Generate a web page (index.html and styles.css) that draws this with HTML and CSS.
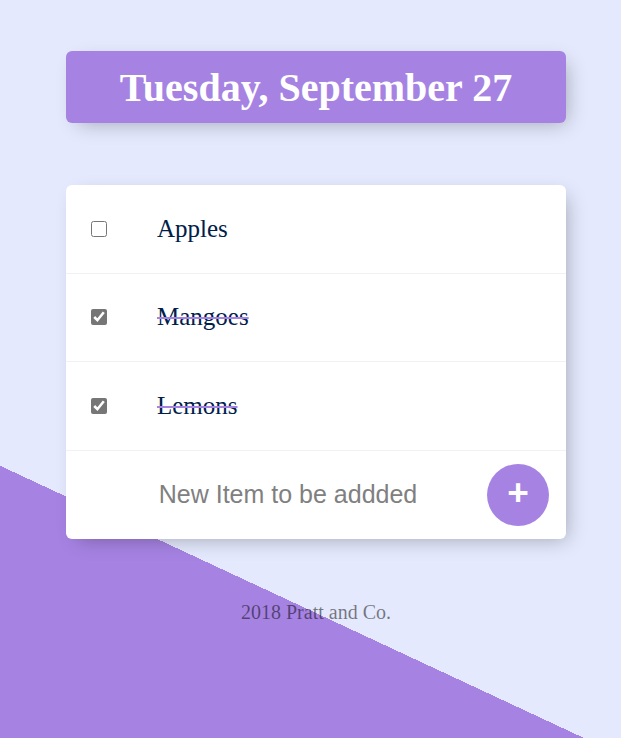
FILE: index.html
```html
<!DOCTYPE html>
<html lang="en">
<head>
<meta charset="utf-8">
<title>To Do List</title>
<link rel="stylesheet" href="styles.css">
</head>
<body>
  <div class="page">
    <div class="box heading">
      <h1>Tuesday, September 27</h1>
    </div>
    <div class="box list">
      <div class="item">
        <input type="checkbox" class="check">
        <p class="label">Apples</p>
      </div>
      <div class="item">
        <input type="checkbox" class="check" checked>
        <p class="label">Mangoes</p>
      </div>
      <div class="item">
        <input type="checkbox" class="check" checked>
        <p class="label">Lemons</p>
      </div>
      <form class="item add-form">
        <input type="text" class="new-item" placeholder="New Item to be addded" autocomplete="off">
        <button type="button" class="add-btn">+</button>
      </form>
    </div>
    <footer class="footer">2018 Pratt and Co.</footer>
  </div>
</body>
</html>
```
FILE: styles.css
```css
html {
  height: 100%;
  background: #E4E9FD linear-gradient(25deg, #A683E3 26.5%, #E4E9FD 26.5%) fixed;
}

body {
  margin: 0;
  padding: 51px 0 0 11px;
  font-family: "Liberation Serif", "Times New Roman", serif;
}

.page {
  width: 500px;
  margin: 0 auto;
}

.box {
  background: #fff;
  border-radius: 6px;
  box-shadow: 6px 6px 19px -6px rgba(0, 0, 0, 0.3);
}

.heading {
  background: #A683E3;
  text-align: center;
  margin-bottom: 62px;
}

.heading h1 {
  margin: 0;
  padding: 12.5px;
  font-size: 40px;
  line-height: 47px;
  font-weight: bold;
  color: #fff;
}

.item {
  box-sizing: border-box;
  height: 88.5px;
  display: flex;
  align-items: center;
  border-bottom: 1px solid #F1F1F1;
}

.item:last-child {
  border-bottom: 0;
}

.check {
  width: 16px;
  height: 16px;
  margin: 0 25px;
  accent-color: #767676;
}

.label {
  margin: 0;
  padding: 0 25px;
  font-size: 25px;
  color: #00204a;
}

.check:checked + .label {
  text-decoration: line-through;
  text-decoration-color: #A683E3;
  text-decoration-thickness: 2px;
}

.add-form {
  margin: 0;
  padding-left: 26px;
}

.new-item {
  box-sizing: border-box;
  width: 392px;
  height: 75px;
  padding: 0;
  border: none;
  background: transparent;
  font-family: "Liberation Sans", Arial, sans-serif;
  font-size: 25px;
  text-align: center;
  outline: none;
}

.new-item::placeholder {
  color: grey;
  opacity: 1;
}

.add-btn {
  width: 62px;
  height: 62px;
  margin-left: 3px;
  padding: 0 0 4px;
  border: 0;
  border-radius: 50%;
  background: #A683E3;
  color: #fff;
  font-family: "Liberation Sans", Arial, sans-serif;
  font-size: 37px;
  font-weight: bold;
  line-height: 1;
  display: flex;
  align-items: center;
  justify-content: center;
}

.footer {
  margin-top: 62px;
  text-align: center;
  font-size: 20px;
  color: rgba(0, 0, 0, 0.5);
}
```
